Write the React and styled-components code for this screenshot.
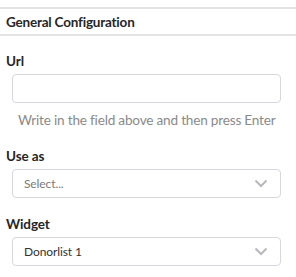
import React from "react";
import styled, { createGlobalStyle } from "styled-components";

const GlobalStyle = createGlobalStyle`
  html, body {
    margin: 0;
    padding: 0;
    background: #ffffff;
  }
  body {
    font-family: Lato, "Noto Sans", sans-serif;
    color: #222;
  }
`;

const Panel = styled.div`
  width: 296px;
  padding-top: 7px;
  box-sizing: border-box;
`;

const SectionHeader = styled.div`
  border-top: 2px solid #e3e3e5;
  border-bottom: 2px solid #e3e3e5;
  height: 25px;
  padding: 0 6px;
  display: flex;
  align-items: center;
  font-size: 13.5px;
  letter-spacing: -0.2px;
  font-weight: 700;
  color: #262626;
`;

const Body = styled.div`
  padding: 16px 15px 0 6px;
  display: flex;
  flex-direction: column;
`;

const Field = styled.div`
  display: flex;
  flex-direction: column;
  margin-bottom: ${(p) => p.$gap || 0}px;
`;

const Label = styled.label`
  font-size: 13.5px;
  letter-spacing: -0.1px;
  font-weight: 700;
  line-height: 18px;
  color: #262626;
  margin-bottom: 4px;
`;

const Input = styled.input`
  box-sizing: border-box;
  margin: 0 0 0 6px;
  height: 29px;
  border: 1px solid #d6d8de;
  border-radius: 4px;
  outline: none;
  font-family: inherit;
  font-size: 13px;
  padding: 0 10px;
`;

const Help = styled.div`
  margin: 7px 0 0 12px;
  font-size: 13.6px;
  letter-spacing: -0.2px;
  line-height: 20px;
  color: #8a8a8a;
  white-space: nowrap;
`;

const SelectBox = styled.div`
  box-sizing: border-box;
  margin-left: 6px;
  height: 29px;
  border: 1px solid #d6d8de;
  border-radius: 4px;
  display: flex;
  align-items: center;
  justify-content: space-between;
  padding: 0 12px 0 11px;
  font-size: 12px;
  letter-spacing: -0.1px;
  color: ${(p) => (p.$placeholder ? "#7a7a7a" : "#333")};
`;

const Chevron = () => (
  <svg width="14" height="9" viewBox="0 0 14 9">
    <path
      d="M1.5 1.5 L7 7 L12.5 1.5"
      fill="none"
      stroke="#b9b9bd"
      strokeWidth="2"
    />
  </svg>
);

export default function App() {
  return (
    <>
      <GlobalStyle />
      <Panel>
        <SectionHeader>General Configuration</SectionHeader>
        <Body>
          <Field $gap={17}>
            <Label>Url</Label>
            <Input type="text" />
            <Help>Write in the field above and then press Enter</Help>
          </Field>
          <Field $gap={17}>
            <Label>Use as</Label>
            <SelectBox $placeholder>
              <span>Select...</span>
              <Chevron />
            </SelectBox>
          </Field>
          <Field>
            <Label>Widget</Label>
            <SelectBox>
              <span>Donorlist 1</span>
              <Chevron />
            </SelectBox>
          </Field>
        </Body>
      </Panel>
    </>
  );
}
